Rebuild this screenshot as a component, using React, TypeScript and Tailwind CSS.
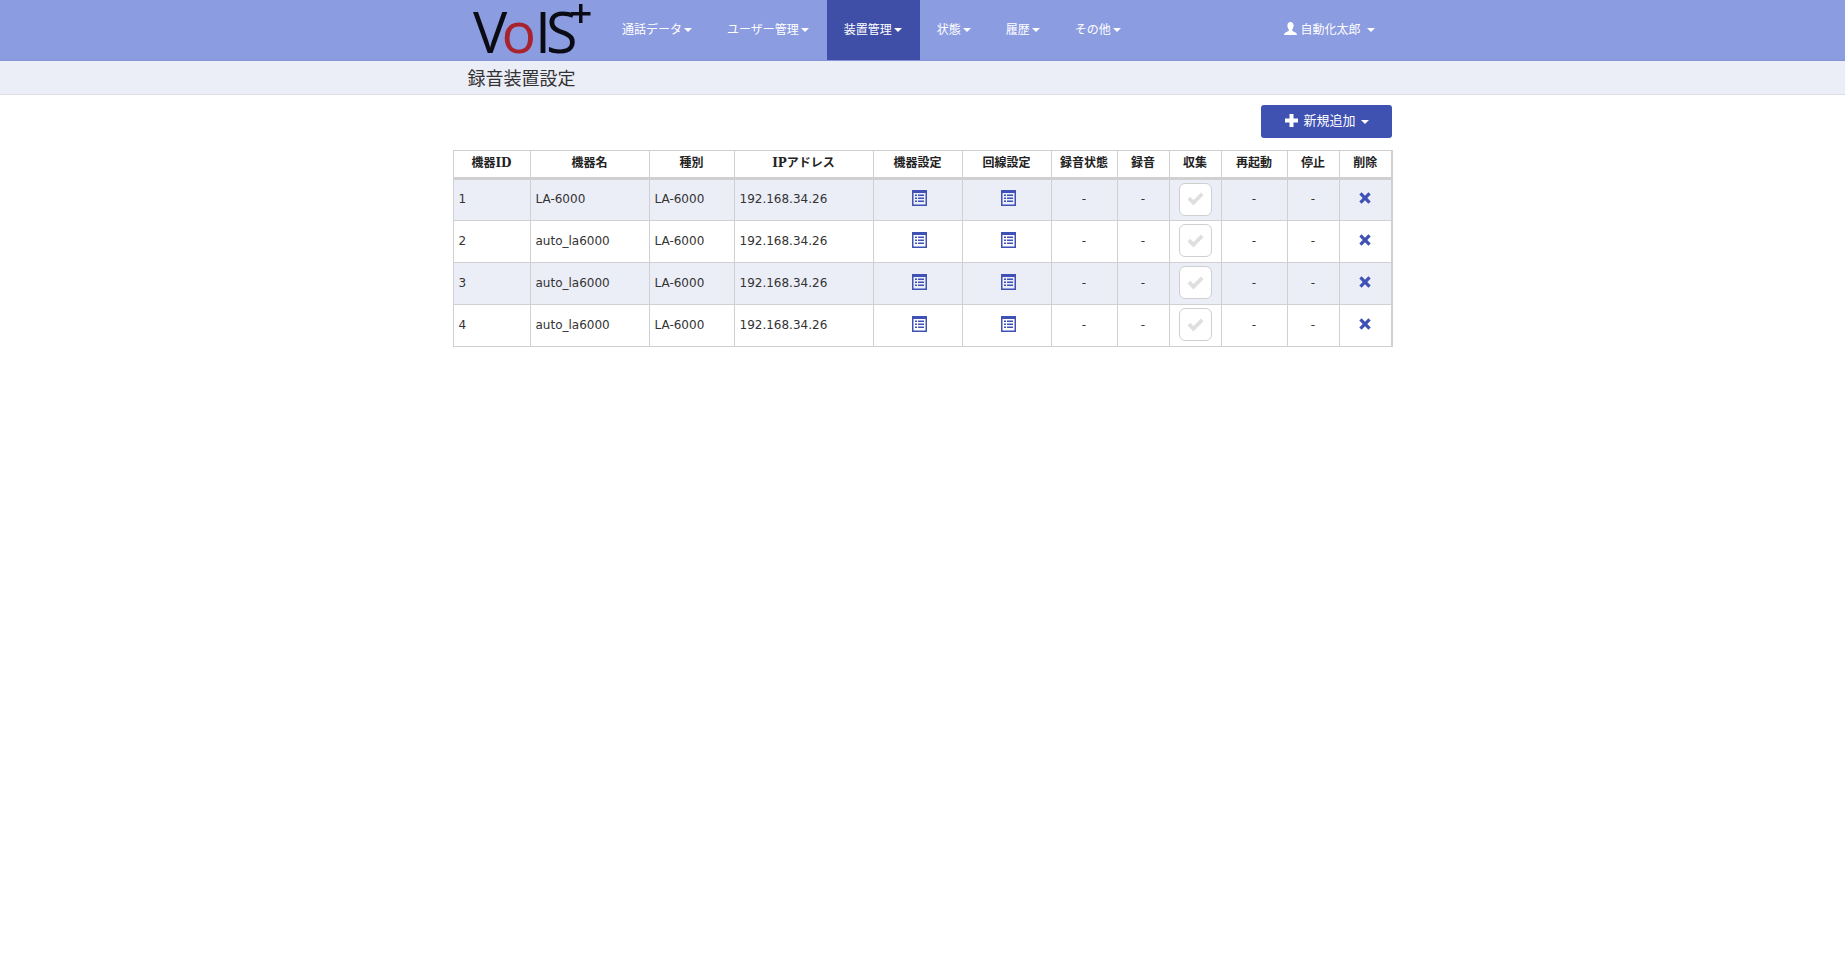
import React from "react";

const sans = { fontFamily: '"DejaVu Sans","Noto Sans CJK JP",sans-serif' };

function Caret() {
  return <span className="ml-[2px] mr-[1px] inline-block h-0 w-0 border-x-[4px] border-t-[4px] border-x-transparent border-t-current align-middle" />;
}

function ListAlt() {
  return (
    <svg width="15" height="16" viewBox="0 0 15 16" className="ml-1 inline-block">
      <path fill="#3f51b5" fillRule="evenodd" d="M0 0h15v16H0zM1.500 3v11.500h12V3z" />
      <path fill="#3f51b5" d="M3 4.500h2v1.500H3zM6 4.500h6v1.500H6zM3 7.500h2V9H3zM6 7.500h6V9H6zM3 10.500h2V12H3zM6 10.500h6V12H6z" />
    </svg>
  );
}

function Cross() {
  return (
    <svg width="12" height="12" viewBox="0 0 12 12">
      <path fill="#3f51b5" d="M2.600 .3 6 3.700 9.400 .3l2.300 2.300L8.300 6l3.400 3.400-2.300 2.300L6 8.300l-3.400 3.400-2.300-2.300L3.700 6 .3 2.600z" />
    </svg>
  );
}

function Check() {
  return (
    <svg width="17" height="14" viewBox="0 0 17 14">
      <path fill="#dfdfdf" d="M.5 7.500 3.200 4.800 6.500 8 14 .5 16.500 3.200 6.500 13.500z" />
    </svg>
  );
}

function Plus() {
  return (
    <svg width="13" height="13" viewBox="0 0 13 13">
      <path fill="#fff" d="M4.500 0h4v4.500H13v4H8.500V13h-4V8.500H0v-4h4.500z" />
    </svg>
  );
}

function User() {
  return (
    <svg width="13" height="13" viewBox="0 0 13 13">
      <path fill="#fff" d="M6.500 0C8.500 0 9.600 1.500 9.600 3.500S8.500 7.500 8 8c0 1 1 1.300 2.500 2S13 11.500 13 13H0c0-1.500 1-2.300 2.500-3S5 9 5 8c-.5-.5-1.600-2.500-1.600-4.500S4.500 0 6.500 0z" />
    </svg>
  );
}

function Logo() {
  return (
    <svg width="152.500" height="60" viewBox="0 0 152.500 60" className="block shrink-0">
      <g fontFamily="'Open Sans',sans-serif" fontSize="57.500">
        <text x="20" y="53" fill="#0b0b14">V</text>
        <text x="48.500" y="53" fill="#a8232d">o</text>
        <text x="82" y="53" fill="#0b0b14">I</text>
        <text x="93" y="53" fill="#0b0b14">S</text>
      </g>
      <path fill="#0b0b14" d="M126 4h3.500v8h8v3.500h-8V23H126v-7.500h-8V12h8z" />
    </svg>
  );
}

const navItems = [
  { label: "通話データ" },
  { label: "ユーザー管理" },
  { label: "装置管理", active: true },
  { label: "状態" },
  { label: "履歴" },
  { label: "その他" },
];

const headers = ["機器ID", "機器名", "種別", "IPアドレス", "機器設定", "回線設定", "録音状態", "録音", "収集", "再起動", "停止", "削除"];
const widths = ["w-[77px]", "w-[119px]", "w-[85px]", "w-[139px]", "w-[89px]", "w-[89px]", "w-[66px]", "w-[52px]", "w-[52px]", "w-[66px]", "w-[52px]", "w-[53px]"];
const rows = [
  { id: 1, name: "LA-6000" },
  { id: 2, name: "auto_la6000" },
  { id: 3, name: "auto_la6000" },
  { id: 4, name: "auto_la6000" },
];

export default function App() {
  const td = "h-[42px] border border-[#d0d0d0] px-[5px] pt-0 pb-[2px] align-middle";
  return (
    <div className="min-h-[965px] bg-white text-[12px] text-[#333]" style={sans}>
      <nav className="h-[61px] border-b border-[#8496d8] bg-[#8c9ce0]">
        <div className="mx-auto flex h-[60px] w-[970px] pl-[15px] pr-[15px]">
          <Logo />
          {navItems.map((it) => (
            <a
              key={it.label}
              className={`flex h-[60px] items-center px-[17px] text-white ${it.active ? "bg-[#3f4fa8]" : ""}`}
            >
              <span className="-mt-[1px]">{it.label}</span>
              <Caret />
            </a>
          ))}
          <div className="ml-auto flex h-[60px] items-center pr-[17px] text-white">
            <span className="-mt-[3px]"><User /></span>
            <span className="-mt-[1px] ml-[3px]">自動化太郎</span>
            <span className="ml-[4px] flex">
              <Caret />
            </span>
          </div>
        </div>
      </nav>

      <div className="h-[34px] border-b border-[#dddde4] bg-[#ebedf7]">
        <div className="mx-auto w-[970px] pl-[30px] pt-[1px] text-[18px] leading-[33px] text-[#333]">録音装置設定</div>
      </div>

      <div className="mx-auto w-[970px] px-[15px]">
        <div className="flex justify-end pt-[10px] pr-[1px]">
          <button className="flex h-[33px] w-[131px] items-center justify-center gap-[5px] rounded-[3px] bg-[#3f51b1] pl-[3px] text-[13px] text-white">
            <span className="-mt-[2px]"><Plus /></span>
            <span className="-mt-[1px]">新規追加</span>
            <span className="-ml-[2px] flex"><Caret /></span>
          </button>
        </div>

        <table className="mt-[12px] w-[939px] table-fixed border-collapse border-r-2 border-[#d0d0d0]">
          <colgroup>
            {widths.map((w, i) => <col key={i} className={w} />)}
          </colgroup>
          <thead>
            <tr>
              {headers.map((h) => (
                <th
                  key={h}
                  className="h-[28px] border border-b-[3px] border-[#d0d0d0] p-0 pb-[2px] text-center text-[12px] font-bold text-[#222]"
                  style={{ fontFamily: '"DejaVu Serif","Noto Sans CJK JP",serif' }}
                >
                  {h}
                </th>
              ))}
            </tr>
          </thead>
          <tbody>
            {rows.map((r, i) => (
              <tr key={r.id} className={i % 2 === 0 ? "bg-[#ebedf7]" : "bg-white"}>
                <td className={td}>{r.id}</td>
                <td className={td}>{r.name}</td>
                <td className={td}>LA-6000</td>
                <td className={td}>192.168.34.26</td>
                <td className={`${td} text-center`}><span className="flex justify-center pb-[2px]"><ListAlt /></span></td>
                <td className={`${td} text-center`}><span className="flex justify-center pb-[2px]"><ListAlt /></span></td>
                <td className={`${td} text-center`}>-</td>
                <td className={`${td} text-center`}>-</td>
                <td className={`${td} text-center`}>
                  <span className="mx-auto flex h-[33px] w-[33px] items-center justify-center rounded-[6px] border border-[#cfcfcf] bg-white"><Check /></span>
                </td>
                <td className={`${td} text-center`}>-</td>
                <td className={`${td} text-center`}>-</td>
                <td className={`${td} text-center`}><span className="flex justify-center pb-[2px] pr-[1px]"><Cross /></span></td>
              </tr>
            ))}
          </tbody>
        </table>
      </div>
    </div>
  );
}
